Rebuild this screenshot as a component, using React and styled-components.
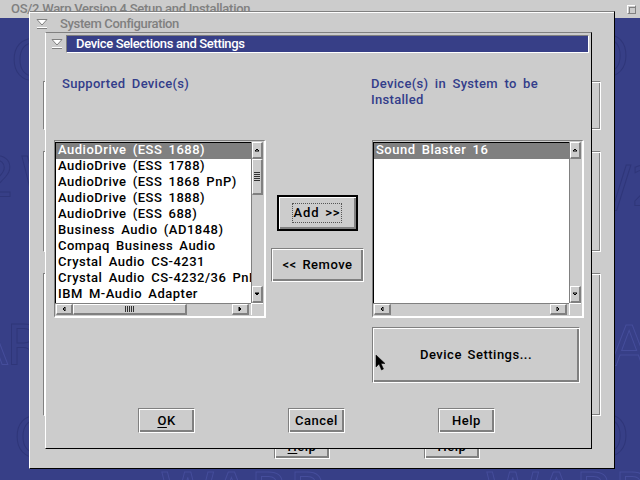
import React from "react";
import styled, { createGlobalStyle } from "styled-components";

const GREY = "#cccccc";
const SHADE = "#808080";
const BLUE = "#373f87";

const GlobalStyle = createGlobalStyle`
  html, body {
    margin: 0;
    padding: 0;
    background: ${BLUE};
  }
  * {
    box-sizing: border-box;
  }
`;

const Desktop = styled.div`
  position: relative;
  width: 640px;
  height: 480px;
  overflow: hidden;
  background: ${BLUE};
  font-family: Roboto, "Liberation Sans", Arial, sans-serif;
  font-size: 13px;
  font-weight: 500;
  letter-spacing: 0.5px;
  word-spacing: 2px;
  color: #000;
`;

const Watermark = styled.svg`
  position: absolute;
  left: 0;
  top: 0;
`;

const MarkText = styled.text`
  font-family: "DejaVu Sans", sans-serif;
  font-size: ${(p) => p.$size || 56}px;
  letter-spacing: 0;
  fill: none;
  stroke: ${(p) => (p.$light ? "#454d9b" : "#2f3679")};
  stroke-width: 1;
`;

const SetupWindow = styled.div`
  position: absolute;
  left: 0;
  top: 0;
  width: 640px;
  height: 18px;
  background: ${GREY};
  color: ${SHADE};
  padding: 1px 0 0 11px;
  line-height: 16px;
  letter-spacing: -0.27px;
  word-spacing: 0;
`;

const RestoreIcon = styled.div`
  position: absolute;
  right: 4px;
  top: 5px;
  width: 9px;
  height: 9px;
  border: 1px solid;
  border-color: #fff ${SHADE} ${SHADE} #fff;
  &::after {
    content: "";
    display: block;
    width: 5px;
    height: 5px;
    margin: 1px;
    border: 1px solid ${SHADE};
  }
`;

const ConfigWindow = styled.div`
  position: absolute;
  left: 29px;
  top: 11px;
  width: 586px;
  height: 458px;
  background: ${GREY};
  border: 1px solid;
  border-color: ${SHADE} #000 #000 #fff;
  box-shadow: inset 0 1px 0 #fff;
`;

const WindowHead = styled.div`
  display: flex;
  align-items: center;
  height: 20px;
  margin-top: 2px;
  padding-left: 6px;
  color: ${SHADE};
  line-height: 16px;
  letter-spacing: -0.35px;
  word-spacing: 0;
`;

const WindowTitle = styled.span`
  margin-left: 12px;
`;

const GroupStack = styled.div`
  display: flex;
  flex-direction: column;
  gap: 21px;
  margin: 47px 13px 0 13px;
`;

const GroupBox = styled.div`
  height: ${(p) => p.$h}px;
  border: 1px solid;
  border-color: ${SHADE} #fff #fff ${SHADE};
  box-shadow: inset 1px 1px 0 #fff, inset -1px -1px 0 ${SHADE};
`;

const BackRow = styled.div`
  display: flex;
  gap: 94px;
  margin: 18px 0 0 244px;
`;

const DeviceWindow = styled.div`
  position: absolute;
  left: 15px;
  top: 20px;
  width: 547px;
  height: 417px;
  background: ${GREY};
  border: 1px solid;
  border-color: ${SHADE} #000 #000 #fff;
  display: flex;
  flex-direction: column;
`;

const TitleRow = styled.div`
  display: flex;
  align-items: center;
  height: 18px;
  margin: 2px 2px 0 5px;
`;

const TitleBar = styled.div`
  flex: 1;
  height: 18px;
  margin-left: 3px;
  padding-left: 9px;
  background: ${BLUE};
  border: 1px solid;
  border-color: ${SHADE} #fff #fff ${SHADE};
  color: #fff;
  line-height: 15px;
  letter-spacing: -0.35px;
  word-spacing: 0;
`;

const Body = styled.div`
  display: grid;
  grid-template-columns: 212px 106px 212px;
  grid-template-rows: 64px 178px;
  padding: 23px 0 0 8px;
`;

const Heading = styled.div`
  color: #333d8a;
  line-height: 16px;
  letter-spacing: 0.3px;
  word-spacing: 3px;
  padding-left: ${(p) => p.$indent}px;
  margin-left: ${(p) => p.$shift || 0}px;
  grid-column: ${(p) => p.$col};
`;

const ListFrame = styled.div`
  display: grid;
  grid-template-columns: 1fr 12px;
  grid-template-rows: 1fr 12px;
  border: 1px solid;
  border-color: ${SHADE} #fff #fff ${SHADE};
  padding: 1px 1px 1px 0;
  background: ${GREY};
  border-width: 1px 2px 2px 1px;
`;

const ListBox = styled.div`
  background: #fff;
  border-top: 1px solid #000;
  border-left: 1px solid #000;
  overflow: hidden;
`;

const ListItem = styled.div`
  height: 16px;
  padding-left: 2px;
  line-height: 14px;
  word-spacing: 2.5px;
  white-space: nowrap;
  overflow: hidden;
  color: ${(p) => (p.$selected ? "#fff" : "#000")};
  background: ${(p) => (p.$selected ? SHADE : "transparent")};
`;

const VTrack = styled.div`
  display: flex;
  flex-direction: column;
  background: ${GREY};
  border-left: 1px solid ${SHADE};
`;

const HTrack = styled.div`
  display: flex;
  background: ${GREY};
  padding-left: 1px;
  padding-right: 2px;
  align-items: stretch;
  border-top: 1px solid ${SHADE};
`;

const Corner = styled.div`
  background: ${GREY};
  border-left: 1px solid #fff;
  border-top: 1px solid #fff;
`;

const ScrollButton = styled.div`
  flex: none;
  display: flex;
  align-items: center;
  justify-content: center;
  width: ${(p) => (p.$vertical ? "auto" : "17px")};
  height: ${(p) => (p.$vertical ? "17px" : "auto")};
  background: ${GREY};
  border: 1px solid;
  border-width: 1px 2px 2px 1px;
  border-color: #fff ${SHADE} ${SHADE} #fff;
`;

const Thumb = styled.div`
  flex: none;
  display: flex;
  align-items: center;
  justify-content: center;
  width: ${(p) => (p.$vertical ? "auto" : `${p.$len}px`)};
  height: ${(p) => (p.$vertical ? `${p.$len}px` : "auto")};
  background: ${GREY};
  border: 1px solid;
  border-width: 1px 2px 2px 1px;
  border-color: #fff ${SHADE} ${SHADE} #fff;
`;

const Spacer = styled.div`
  flex: 1;
`;

const ActionColumn = styled.div`
  display: flex;
  flex-direction: column;
  align-items: center;
  gap: 17px;
  padding: 55px 4px 0 0;
`;

const Button = styled.div`
  display: flex;
  align-items: center;
  justify-content: center;
  flex: none;
  width: ${(p) => p.$w}px;
  height: ${(p) => p.$h}px;
  background: ${GREY};
  border: 1px solid;
  border-color: ${SHADE} #fff #fff ${SHADE};
  box-shadow: inset 1px 1px 0 #fff, inset -2px -2px 0 ${SHADE};
  line-height: 14px;
  margin-left: ${(p) => p.$shift || 0}px;
`;

const DefaultButton = styled(Button)`
  border: 2px solid #000;
`;

const FocusLabel = styled.span`
  padding: 2px 1px;
  letter-spacing: 0.8px;
  outline: 1px dotted #555;
`;

const Mnemonic = styled.span`
  text-decoration: underline;
  text-underline-offset: 2px;
`;

const SettingsRow = styled.div`
  margin: 9px 0 0 326px;
`;

const Footer = styled.div`
  display: flex;
  gap: 93px;
  margin: 25px 0 0 92px;
`;

const Pointer = styled.svg`
  position: absolute;
  left: 375px;
  top: 354px;
`;

const supported = [
  "AudioDrive (ESS 1688)",
  "AudioDrive (ESS 1788)",
  "AudioDrive (ESS 1868 PnP)",
  "AudioDrive (ESS 1888)",
  "AudioDrive (ESS 688)",
  "Business Audio (AD1848)",
  "Compaq Business Audio",
  "Crystal Audio CS-4231",
  "Crystal Audio CS-4232/36 PnP",
  "IBM M-Audio Adapter",
];

function SysMenu() {
  return (
    <svg width="12" height="12" viewBox="0 0 12 12">
      <path d="M1 1.5h10L6 7z" fill="#fff" stroke={SHADE} strokeWidth="1" />
      <path d="M1 9.5h10" stroke="#fff" strokeWidth="1" />
      <path d="M1 10.5h10" stroke={SHADE} strokeWidth="1" />
    </svg>
  );
}

// arrows are the little 5x5 glyphs of the PM scroll buttons
function Arrow({ dir, solid }) {
  const points = {
    up: "1,4 3,2 5,4",
    down: "1,2 3,4 5,2",
    left: "4,1 2,3 4,5",
    right: "2,1 4,3 2,5",
  }[dir];
  return (
    <svg width="6" height="6" viewBox="0 0 6 6">
      <polygon
        points={points}
        fill={solid ? "#000" : "none"}
        stroke="#000"
        strokeWidth="1"
      />
    </svg>
  );
}

function Grip({ vertical }) {
  const lines = [0, 2, 4, 6, 8];
  return (
    <svg width={vertical ? 6 : 10} height={vertical ? 10 : 6}>
      {lines.map((n) =>
        vertical ? (
          <rect key={n} x="0" y={n} width="6" height="1" fill="#333" />
        ) : (
          <rect key={n} x={n} y="0" width="1" height="6" fill="#333" />
        )
      )}
    </svg>
  );
}

function DeviceList({ items, active }) {
  return (
    <ListFrame>
      <ListBox>
        {items.map((item, i) => (
          <ListItem key={item} $selected={i === 0}>
            {item}
          </ListItem>
        ))}
      </ListBox>
      <VTrack>
        <ScrollButton $vertical>
          <Arrow dir="up" />
        </ScrollButton>
        {active && (
          <Thumb $vertical $len={36}>
            <Grip vertical />
          </Thumb>
        )}
        <Spacer />
        <ScrollButton $vertical>
          <Arrow dir="down" solid={active} />
        </ScrollButton>
      </VTrack>
      <HTrack>
        <ScrollButton>
          <Arrow dir="left" />
        </ScrollButton>
        {active && (
          <Thumb $len={114}>
            <Grip />
          </Thumb>
        )}
        <Spacer />
        <ScrollButton>
          <Arrow dir="right" solid={active} />
        </ScrollButton>
      </HTrack>
      <Corner />
    </ListFrame>
  );
}

export default function App() {
  return (
    <Desktop>
      <GlobalStyle />
      <Watermark width="640" height="480">
        <MarkText x="11" y="79">O</MarkText>
        <MarkText x="585" y="75">O</MarkText>
        <MarkText x="-20" y="196">2</MarkText>
        <MarkText x="20" y="196">W</MarkText>
        <MarkText x="612" y="205">/2</MarkText>
        <MarkText x="-30" y="364" $light>A</MarkText>
        <MarkText x="6" y="364">R</MarkText>
        <MarkText x="610" y="365" $light>A</MarkText>
        <MarkText x="14" y="456">O</MarkText>
        <MarkText x="585" y="455">O</MarkText>
        <MarkText x="160" y="512" $light>WARP</MarkText>
        <MarkText x="485" y="512" $light>WARP</MarkText>
      </Watermark>

      <SetupWindow>
        OS/2 Warp Version 4 Setup and Installation
        <RestoreIcon />
      </SetupWindow>

      <ConfigWindow>
        <WindowHead>
          <SysMenu />
          <WindowTitle>System Configuration</WindowTitle>
        </WindowHead>
        <GroupStack>
          <GroupBox $h={49} />
          <GroupBox $h={101} />
          <GroupBox $h={143} />
        </GroupStack>
        <BackRow>
          <Button $w={56} $h={25}>
            <Mnemonic>H</Mnemonic>elp
          </Button>
          <Button $w={56} $h={25}>
            Help
          </Button>
        </BackRow>

        <DeviceWindow>
          <TitleRow>
            <SysMenu />
            <TitleBar>Device Selections and Settings</TitleBar>
          </TitleRow>
          <Body>
            <Heading $col="1" $indent={8}>
              Supported Device(s)
            </Heading>
            <Heading $col="3" $indent={0} $shift={-1}>
              Device(s) in System to be Installed
            </Heading>
            <DeviceList items={supported} active />
            <ActionColumn>
              <DefaultButton $w={81} $h={36}>
                <FocusLabel>Add &gt;&gt;</FocusLabel>
              </DefaultButton>
              <Button $w={93} $h={34} $shift={1}>
                &lt;&lt; Remove
              </Button>
            </ActionColumn>
            <DeviceList items={["Sound Blaster 16"]} />
          </Body>
          <SettingsRow>
            <Button $w={208} $h={56}>
              Device Settings...
            </Button>
          </SettingsRow>
          <Footer>
            <Button $w={57} $h={25}>
              <span>
                <Mnemonic>O</Mnemonic>K
              </span>
            </Button>
            <Button $w={57} $h={25}>
              Cancel
            </Button>
            <Button $w={57} $h={25}>
              Help
            </Button>
          </Footer>
        </DeviceWindow>
      </ConfigWindow>

      <Pointer width="12" height="18" viewBox="0 0 12 18">
        <path
          d="M1 1v12l3-3 2.500 6 2-1-2.500-5.500h4z"
          fill="#000"
          stroke="#000"
          strokeWidth="0.5"
        />
      </Pointer>
    </Desktop>
  );
}
